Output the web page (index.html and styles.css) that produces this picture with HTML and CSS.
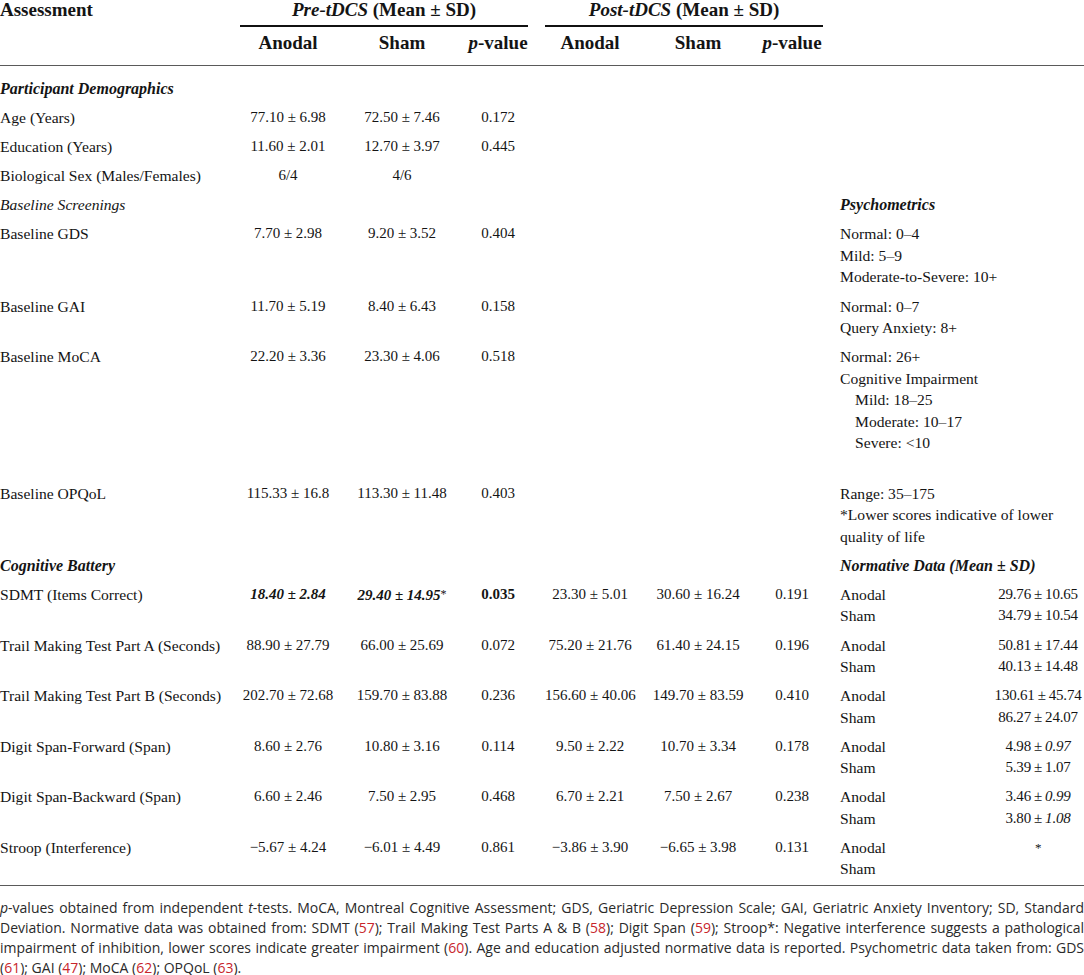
FILE: index.html
```html
<!DOCTYPE html>
<html lang="en">
<head>
<meta charset="utf-8">
<title>Table</title>
<link rel="stylesheet" href="styles.css">
</head>
<body>
<table class="t">
  <colgroup>
    <col class="w-lab"><col class="w-a"><col class="w-s"><col class="w-p"><col class="w-gap">
    <col class="w-a2"><col class="w-s2"><col class="w-p2"><col class="w-gap">
    <col class="w-nl"><col class="w-nv">
  </colgroup>
  <thead>
    <tr class="hr1">
      <th class="lab">Assessment</th>
      <th colspan="3" class="grp"><i>Pre-tDCS</i> (Mean ± SD)</th>
      <th></th>
      <th colspan="3" class="grp"><i>Post-tDCS</i> (Mean ± SD)</th>
      <th></th>
      <th colspan="2"></th>
    </tr>
    <tr class="hr2">
      <th></th>
      <th>Anodal</th><th>Sham</th><th><i>p</i>-value</th>
      <th></th>
      <th>Anodal</th><th>Sham</th><th><i>p</i>-value</th>
      <th></th>
      <th colspan="2"></th>
    </tr>
  </thead>
  <tbody>
    <tr class="first">
      <td class="lab sec-bi">Participant Demographics</td>
      <td></td><td></td><td></td><td></td><td></td><td></td><td></td><td></td><td colspan="2"></td>
    </tr>
    <tr>
      <td class="lab">Age (Years)</td>
      <td class="num">77.10 ± 6.98</td><td class="num">72.50 ± 7.46</td><td class="num">0.172</td>
      <td></td><td></td><td></td><td></td><td></td><td colspan="2"></td>
    </tr>
    <tr>
      <td class="lab">Education (Years)</td>
      <td class="num">11.60 ± 2.01</td><td class="num">12.70 ± 3.97</td><td class="num">0.445</td>
      <td></td><td></td><td></td><td></td><td></td><td colspan="2"></td>
    </tr>
    <tr>
      <td class="lab">Biological Sex (Males/Females)</td>
      <td class="num">6/4</td><td class="num">4/6</td><td></td>
      <td></td><td></td><td></td><td></td><td></td><td colspan="2"></td>
    </tr>
    <tr>
      <td class="lab sec-i">Baseline Screenings</td>
      <td></td><td></td><td></td><td></td><td></td><td></td><td></td><td></td>
      <td colspan="2" class="note sec-bi">Psychometrics</td>
    </tr>
    <tr>
      <td class="lab">Baseline GDS</td>
      <td class="num">7.70 ± 2.98</td><td class="num">9.20 ± 3.52</td><td class="num">0.404</td>
      <td></td><td></td><td></td><td></td><td></td>
      <td colspan="2" class="note">
        <div>Normal: 0–4</div>
        <div>Mild: 5–9</div>
        <div>Moderate-to-Severe: 10+</div>
      </td>
    </tr>
    <tr>
      <td class="lab">Baseline GAI</td>
      <td class="num">11.70 ± 5.19</td><td class="num">8.40 ± 6.43</td><td class="num">0.158</td>
      <td></td><td></td><td></td><td></td><td></td>
      <td colspan="2" class="note">
        <div>Normal: 0–7</div>
        <div>Query Anxiety: 8+</div>
      </td>
    </tr>
    <tr>
      <td class="lab">Baseline MoCA</td>
      <td class="num">22.20 ± 3.36</td><td class="num">23.30 ± 4.06</td><td class="num">0.518</td>
      <td></td><td></td><td></td><td></td><td></td>
      <td colspan="2" class="note">
        <div>Normal: 26+</div>
        <div>Cognitive Impairment</div>
        <div class="ind">Mild: 18–25</div>
        <div class="ind">Moderate: 10–17</div>
        <div class="ind">Severe: &lt;10</div>
        <div class="blank"></div>
      </td>
    </tr>
    <tr>
      <td class="lab">Baseline OPQoL</td>
      <td class="num">115.33 ± 16.8</td><td class="num">113.30 ± 11.48</td><td class="num">0.403</td>
      <td></td><td></td><td></td><td></td><td></td>
      <td colspan="2" class="note">
        <div>Range: 35–175</div>
        <div>*Lower scores indicative of lower quality of life</div>
      </td>
    </tr>
    <tr>
      <td class="lab sec-bi">Cognitive Battery</td>
      <td></td><td></td><td></td><td></td><td></td><td></td><td></td><td></td>
      <td colspan="2" class="note sec-bi">Normative Data (Mean ± SD)</td>
    </tr>
    <tr>
      <td class="lab">SDMT (Items Correct)</td>
      <td class="num"><b><i>18.40 ± 2.84</i></b></td><td class="num"><b><i>29.40 ± 14.95</i></b><span class="ast">*</span></td><td class="num"><b>0.035</b></td>
      <td></td>
      <td class="num">23.30 ± 5.01</td><td class="num">30.60 ± 16.24</td><td class="num">0.191</td>
      <td></td>
      <td class="nl"><div>Anodal</div><div>Sham</div></td>
      <td class="nv"><div>29.76 ± 10.65</div><div>34.79 ± 10.54</div></td>
    </tr>
    <tr>
      <td class="lab">Trail Making Test Part A (Seconds)</td>
      <td class="num">88.90 ± 27.79</td><td class="num">66.00 ± 25.69</td><td class="num">0.072</td>
      <td></td>
      <td class="num">75.20 ± 21.76</td><td class="num">61.40 ± 24.15</td><td class="num">0.196</td>
      <td></td>
      <td class="nl"><div>Anodal</div><div>Sham</div></td>
      <td class="nv"><div>50.81 ± 17.44</div><div>40.13 ± 14.48</div></td>
    </tr>
    <tr>
      <td class="lab">Trail Making Test Part B (Seconds)</td>
      <td class="num">202.70 ± 72.68</td><td class="num">159.70 ± 83.88</td><td class="num">0.236</td>
      <td></td>
      <td class="num">156.60 ± 40.06</td><td class="num">149.70 ± 83.59</td><td class="num">0.410</td>
      <td></td>
      <td class="nl"><div>Anodal</div><div>Sham</div></td>
      <td class="nv"><div>130.61 ± 45.74</div><div>86.27 ± 24.07</div></td>
    </tr>
    <tr>
      <td class="lab">Digit Span-Forward (Span)</td>
      <td class="num">8.60 ± 2.76</td><td class="num">10.80 ± 3.16</td><td class="num">0.114</td>
      <td></td>
      <td class="num">9.50 ± 2.22</td><td class="num">10.70 ± 3.34</td><td class="num">0.178</td>
      <td></td>
      <td class="nl"><div>Anodal</div><div>Sham</div></td>
      <td class="nv"><div>4.98 ± <i>0.97</i></div><div>5.39 ± 1.07</div></td>
    </tr>
    <tr>
      <td class="lab">Digit Span-Backward (Span)</td>
      <td class="num">6.60 ± 2.46</td><td class="num">7.50 ± 2.95</td><td class="num">0.468</td>
      <td></td>
      <td class="num">6.70 ± 2.21</td><td class="num">7.50 ± 2.67</td><td class="num">0.238</td>
      <td></td>
      <td class="nl"><div>Anodal</div><div>Sham</div></td>
      <td class="nv"><div>3.46 ± <i>0.99</i></div><div>3.80 ± <i>1.08</i></div></td>
    </tr>
    <tr class="last">
      <td class="lab">Stroop (Interference)</td>
      <td class="num">−5.67 ± 4.24</td><td class="num">−6.01 ± 4.49</td><td class="num">0.861</td>
      <td></td>
      <td class="num">−3.86 ± 3.90</td><td class="num">−6.65 ± 3.98</td><td class="num">0.131</td>
      <td></td>
      <td class="nl"><div>Anodal</div><div>Sham</div></td>
      <td class="nv"><div class="star">*</div></td>
    </tr>
  </tbody>
</table>
<div class="foot">
  <span class="ln"><i>p</i>-values obtained from independent <i>t</i>-tests. MoCA, Montreal Cognitive Assessment; GDS, Geriatric Depression Scale; GAI, Geriatric Anxiety Inventory; SD, Standard</span>
  <span class="ln">Deviation. Normative data was obtained from: SDMT (<span class="ref">57</span>); Trail Making Test Parts A &amp; B (<span class="ref">58</span>); Digit Span (<span class="ref">59</span>); Stroop*: Negative interference suggests a pathological</span>
  <span class="ln">impairment of inhibition, lower scores indicate greater impairment (<span class="ref">60</span>). Age and education adjusted normative data is reported. Psychometric data taken from: GDS</span>
  <span class="ln end">(<span class="ref">61</span>); GAI (<span class="ref">47</span>); MoCA (<span class="ref">62</span>); OPQoL (<span class="ref">63</span>).</span>
</div>
</body>
</html>
```

FILE: styles.css
```css
html, body {
  margin: 0;
  padding: 0;
  background: #ffffff;
}

body {
  color: #141414;
  font-family: "Liberation Serif", "Times New Roman", serif;
}

.t {
  width: 1084px;
  table-layout: fixed;
  border-collapse: separate;
  border-spacing: 0;
  font-size: 15.6px;
}

.w-lab { width: 240px; }
.w-a { width: 96px; }
.w-s { width: 132px; }
.w-p { width: 60px; }
.w-gap { width: 17px; }
.w-a2 { width: 90px; }
.w-s2 { width: 126px; }
.w-p2 { width: 62px; }
.w-nl { width: 152px; }
.w-nv { width: 92px; }

.t th,
.t td {
  padding: 0;
  vertical-align: top;
  text-align: center;
  white-space: nowrap;
}

.t th {
  font-size: 19px;
  line-height: 20px;
  font-weight: bold;
}

.t .lab {
  text-align: left;
}

.hr1 th {
  padding-bottom: 5px;
}

.hr1 .grp {
  border-bottom: 2px solid #111111;
}

.hr2 th {
  padding-top: 6px;
  padding-bottom: 12px;
  border-bottom: 1.5px solid #5a5a5a;
}

.t td {
  line-height: 21.5px;
  padding-top: 3.8px;
  padding-bottom: 3.8px;
}

.t td.num {
  font-size: 15px;
}

.t tr.first td {
  padding-top: 12px;
}

.t tr.last td {
  border-bottom: 1.5px solid #5a5a5a;
  padding-bottom: 5px;
}

.sec-bi {
  font-weight: bold;
  font-style: italic;
  font-size: 16px;
}

.sec-i {
  font-style: italic;
}

.t .note {
  text-align: left;
  white-space: normal;
  padding-right: 10px;
}

.note .ind {
  padding-left: 15px;
}

.note .blank {
  height: 21.5px;
}

.t .nl {
  text-align: left;
}

.t .nv {
  text-align: center;
  font-size: 15px;
  letter-spacing: -0.2px;
  word-spacing: -0.5px;
}

.star {
  font-size: 13px;
}

.ast {
  font-size: 12px;
  vertical-align: 2px;
}

.foot {
  margin-top: 12px;
  font-family: "Open Sans", "Liberation Sans", sans-serif;
  font-size: 14px;
  line-height: 20px;
  color: #2a2a2a;
}

.foot .ln {
  display: block;
  text-align: justify;
  text-align-last: justify;
  white-space: nowrap;
}

.foot .ln.end {
  text-align-last: left;
}

.ref {
  color: #c8252c;
}
```
